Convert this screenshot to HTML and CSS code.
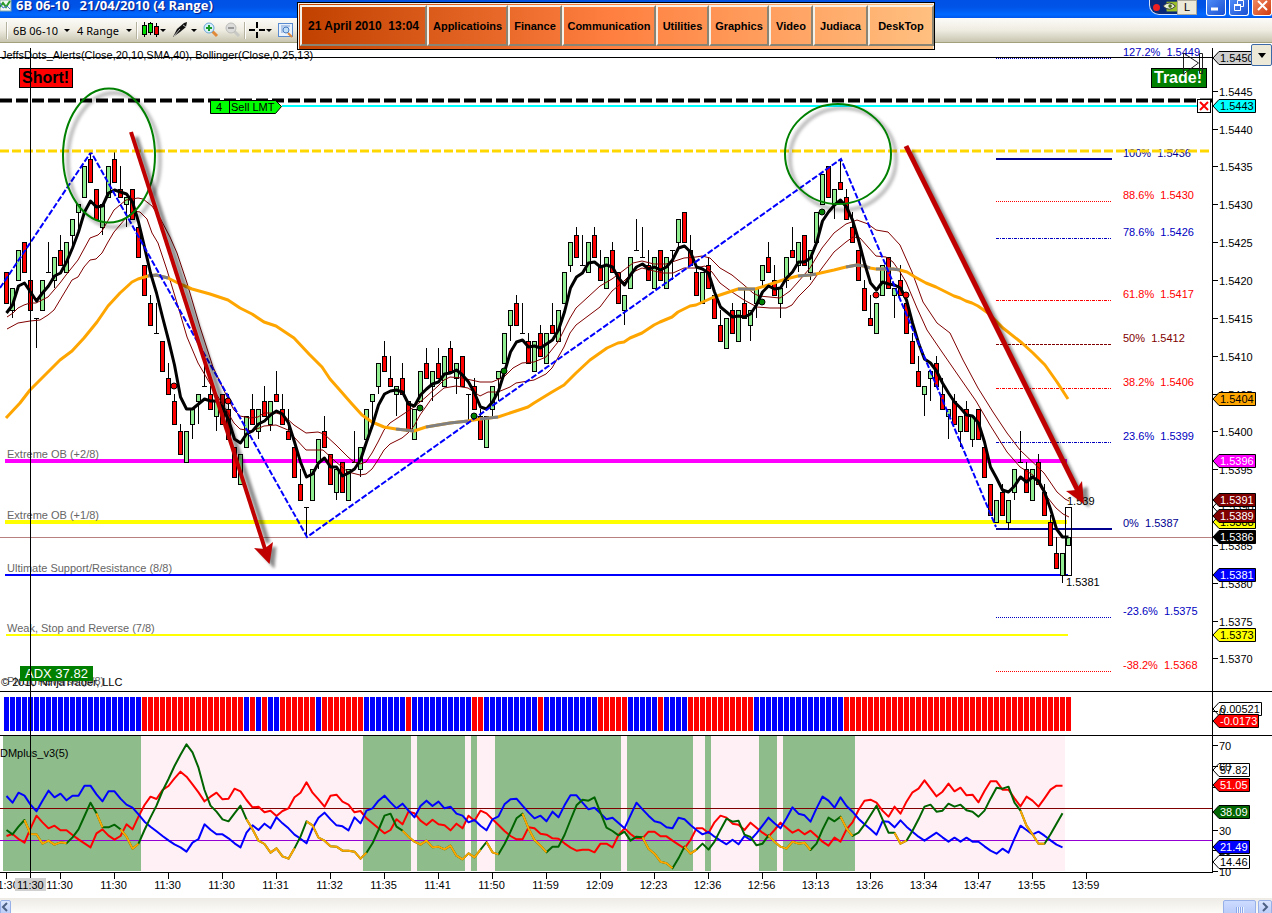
FILE: index.html
```
<!DOCTYPE html>
<html lang="en">
  <head>
    <meta charset="UTF-8" />
    <meta name="viewport" content="width=device-width, initial-scale=1.0" />
    <title>6B 06-10 21/04/2010 (4 Range)</title>
    <link rel="stylesheet" href="styles.css" />
  </head>
  <body>
    <header class="titlebar">
      <svg class="app-icon" width="12" height="13" viewBox="0 0 12 13">
        <rect x="0" y="0" width="11" height="11" fill="#f4f8f4" stroke="#8aa" />
        <path d="M0 7l3-4 3 4 4-6" fill="none" stroke="#2a9a2a" stroke-width="2" />
        <path d="M0 3l3 5 4-2 3 3" fill="none" stroke="#4477cc" />
      </svg>
      <h1>6B 06-10 &nbsp; 21/04/2010 (4 Range)</h1>
      <div class="tray">
        <i class="rec"></i>
        <svg width="18" height="12" viewBox="0 0 18 12">
          <rect x="4" y="0" width="14" height="11" fill="#9bbf2a" />
          <path d="M0 5q7-7 14 0q-7 7-14 0z" fill="#e8efd0" stroke="#334" />
          <circle cx="8" cy="5" r="2" fill="#456a10" />
        </svg>
        <span class="lang">L</span>
      </div>
      <div class="win-buttons">
        <button class="win" aria-label="Minimize"><svg width="18" height="14"><path d="M4 9h7" stroke="#fff" stroke-width="3" /></svg></button>
        <button class="win" aria-label="Restore"><svg width="18" height="14"><path d="M7.500 4V.5h6v6H11M4.500 4.500h6v6h-6z" fill="none" stroke="#fff" /><path d="M4 5h7" stroke="#fff" stroke-width="2" /></svg></button>
        <button class="win close" aria-label="Close"><svg width="18" height="14"><path d="M5 1l9 9M14 1l-9 9" stroke="#fff" stroke-width="2" /></svg></button>
      </div>
    </header>

    <nav class="toolbar">
      <span class="sep"></span>
      <label class="pick instrument"><select aria-label="Instrument"><option>6B 06-10</option></select></label>
      <label class="pick period"><select aria-label="Period"><option>4 Range</option></select></label>
      <span class="sep"></span>
      <button class="tool menu" aria-label="Chart style">
        <svg width="18" height="16" viewBox="0 0 18 16">
          <path d="M3.500 0v15M9.500 0v13M15.500 1v14" stroke="#000" />
          <rect x="1.500" y="3.500" width="4" height="9" fill="#0d0" stroke="#000" />
          <rect x="7.500" y="1.500" width="4" height="9" fill="#0d0" stroke="#000" />
          <rect x="13.500" y="4.500" width="4" height="8" fill="#e00" stroke="#000" />
        </svg>
      </button>
      <button class="tool menu" aria-label="Drawing tools">
        <svg width="18" height="16" viewBox="0 0 18 16">
          <path d="M1 15l4-8 7-6 3-1-1 5-6 5z" fill="#111" />
          <path d="M2 14l6-7M11 3l3 2" stroke="#bbb" />
        </svg>
      </button>
      <button class="tool" aria-label="Zoom in">
        <svg width="16" height="16" viewBox="0 0 16 16">
          <path d="M9 9l5 5" stroke="#e0893a" stroke-width="3" />
          <circle cx="6" cy="6" r="5" fill="#d8f0fa" stroke="#6aa5d8" />
          <path d="M3 6h6M6 3v6" stroke="#1a9a2a" stroke-width="2" />
        </svg>
      </button>
      <button class="tool" aria-label="Zoom out" disabled>
        <svg width="16" height="16" viewBox="0 0 16 16">
          <path d="M9 9l5 5" stroke="#c8c8c4" stroke-width="3" />
          <circle cx="6" cy="6" r="5" fill="#dcdcda" stroke="#bcbcba" />
          <path d="M3 6h6" stroke="#999" stroke-width="2" />
        </svg>
      </button>
      <span class="sep"></span>
      <button class="tool menu" aria-label="Cursor">
        <svg width="16" height="16" viewBox="0 0 16 16">
          <path d="M0 8h6M10 8h6M8 0v6M8 10v6" stroke="#000" stroke-width="2" />
        </svg>
      </button>
      <button class="tool" aria-label="Data box">
        <svg width="15" height="15" viewBox="0 0 15 15">
          <rect x=".5" y=".5" width="14" height="13" fill="#eaf2fc" stroke="#5a8ad0" />
          <path d="M3 3h9M3 5h2M3 7h2M3 9h2" stroke="#7aa0d8" />
          <path d="M10 10l4 4" stroke="#e0893a" stroke-width="2" />
          <circle cx="8" cy="7" r="3" fill="#bfe0f8" stroke="#4a7ac0" />
        </svg>
      </button>
    </nav>

    <div class="launcher">
      <button>21 April 2010 &nbsp;13:04</button>
      <button>Applicatioins</button>
      <button>Finance</button>
      <button>Communication</button>
      <button>Utilities</button>
      <button>Graphics</button>
      <button>Video</button>
      <button>Judiaca</button>
      <button>DeskTop</button>
    </div>

    <main class="chart">
      <svg id="chart" viewBox="0 43 1272 855" role="img" aria-label="6B 06-10 price chart">
        <defs>
          <filter id="soft" x="-20%" y="-20%" width="140%" height="140%"><feGaussianBlur stdDeviation="1.500" /></filter>
        </defs>

        <!-- DM panel background, reference levels -->
        <g id="dmBack" class="crisp"></g>
        <path class="crisp" d="M0 808.500H1212" stroke="#800000" />
        <path class="crisp" d="M0 840.500H1212" stroke="#9400d3" />
        <g id="dmLines"></g>
        <g id="bars" class="crisp"></g>

        <!-- Murrey levels -->
        <g fill="none">
          <path d="M5 461H1067" stroke="#f0f" stroke-width="4" />
          <path d="M5 522H1067" stroke="#ff0" stroke-width="4" />
          <path d="M5 575H1068" stroke="#00f" stroke-width="2" />
          <path d="M6 635H1068" stroke="#ff0" stroke-width="2" />
          <path d="M0 537.500H1212" stroke="#b98080" />
        </g>
        <g class="level">
          <text x="7" y="458">Extreme OB (+2/8)</text>
          <text x="7" y="519">Extreme OB (+1/8)</text>
          <text x="7" y="572">Ultimate Support/Resistance (8/8)</text>
          <text x="7" y="632">Weak, Stop and Reverse (7/8)</text>
          <text x="7" y="685">Pivot, Reverse (6/8)</text>
        </g>

        <g id="fibs"></g>
        <g id="candles" class="crisp"></g>
        <rect class="crisp" x="1065.500" y="507.500" width="6" height="68" fill="none" stroke="#000" />
        <g id="averages"></g>
        <polyline points="0,288 91,152 307,537 841,159 996,527" fill="none" stroke="#00f" stroke-width="2" stroke-dasharray="6 2" />
        <g id="dots"></g>
        <text x="1067" y="505">1.539</text>
        <text x="1066" y="586">1.5381</text>

        <!-- order and alert lines -->
        <path d="M0 100.500H1212" stroke="#000" stroke-width="4" stroke-dasharray="12 4" />
        <path d="M282 106H1197" stroke="#0ff" stroke-width="2" />
        <path d="M0 151H1211" stroke="#ffd700" stroke-width="3" stroke-dasharray="9 3" />
        <path d="M210.500 100.500h65l6 6-6 7h-65z" fill="#0f0" stroke="#000" />
        <path d="M229.500 101v12" stroke="#000" />
        <text x="216" y="111">4</text>
        <text x="231" y="111">Sell LMT</text>

        <!-- hand drawn marks -->
        <g fill="none" stroke="#000" stroke-opacity=".25" stroke-width="4" filter="url(#soft)">
          <ellipse cx="114" cy="160" rx="46" ry="67" />
          <ellipse cx="843" cy="159" rx="53" ry="51" />
        </g>
        <g fill="none" stroke="green" stroke-width="2">
          <ellipse cx="109" cy="155.500" rx="46" ry="67" />
          <ellipse cx="838" cy="154" rx="53" ry="50" />
        </g>
        <g stroke="#000" fill="#000" opacity=".45" filter="url(#soft)">
          <path d="M136 137L268 543" stroke-width="5" />
          <path d="M274 568l-15-17 17-4z" />
          <path d="M911 151L1080 491" stroke-width="5" />
          <path d="M1089 507l-17-13 15-7z" />
        </g>
        <g stroke="#c00000" fill="#c00000">
          <path d="M131 132L265 549" stroke-width="4" />
          <path d="M269.500 564L254 548l10 1 9-7z" stroke="none" />
          <path d="M906 146L1078 491" stroke-width="5" />
          <path d="M1084 504l-18-13 10-1 6-9z" stroke="none" />
        </g>

        <text x="1" y="59">JeffsDots_Alerts(Close,20,10,SMA,40), Bollinger(Close,0.25,13)</text>
        <rect x="19.500" y="68.500" width="53" height="19" fill="red" stroke="#000" />
        <text class="big" x="22" y="83">Short!</text>
        <rect x="1151.500" y="68.500" width="55" height="19" fill="green" stroke="#000" />
        <text class="big white" x="1154" y="83">Trade!</text>
        <path d="M1183.500 53v21l15-11zM1199.500 53.500h3v20h-3z" fill="none" stroke="#222" />

        <text x="1" y="686">© 2010 NinjaTrader, LLC</text>
        <rect x="20" y="666" width="73" height="15" fill="green" />
        <text class="adx white" x="25" y="678">ADX 37.82</text>
        <text x="0" y="757">DMplus_v3(5)</text>

        <!-- frame and crosshair -->
        <path class="crisp" d="M0 57.500H1212M30.500 48V878M0 691.500H1272M0 735.500H1272M0 872.500H1213M1212.500 48V872" stroke="#000" fill="none" />
        <g id="timeAxis"></g>
        <rect x="15" y="878" width="31" height="13" fill="#d0d0d0" />
        <text x="17" y="889">11:30</text>
        <g id="priceAxis"></g>

        <foreignObject x="1197" y="99" width="14" height="15">
          <button class="cancel" aria-label="Cancel order"><svg width="10" height="10"><path d="M1 1l8 8M9 1l-8 8" stroke="#f00" stroke-width="2" /></svg></button>
        </foreignObject>
      </svg>
      <button class="chart-menu" aria-label="Chart menu"></button>
    </main>

    <footer class="scrollbar">
      <button class="arrow prev" aria-label="Scroll left"><svg width="8" height="10"><path d="M6 1L2 5l4 4" fill="none" stroke="#4d6185" stroke-width="2" /></svg></button>
      <div class="track"><div class="thumb"></div></div>
      <button class="arrow" aria-label="Scroll right"><svg width="8" height="10"><path d="M2 1l4 4-4 4" fill="none" stroke="#4d6185" stroke-width="2" /></svg></button>
    </footer>

    <script src="chart.js"></script>
  </body>
</html>
```

FILE: styles.css
```
* {
  box-sizing: border-box;
  margin: 0;
  padding: 0;
}

body {
  display: flex;
  flex-direction: column;
  min-height: 100vh;
  overflow: hidden;
  position: relative;
  background: #fff;
  font-family: "Liberation Sans", Arial, sans-serif;
  font-size: 11px;
}

button {
  border: 0;
  background: none;
  font: inherit;
  color: inherit;
}

/* title bar */
.titlebar {
  display: flex;
  align-items: flex-start;
  height: 18px;
  background: linear-gradient(#0050e4, #0054e8 40%, #0068ff 80%, #0058ee);
}
.titlebar h1 {
  flex: 1;
  margin-left: 4px;
  line-height: 11px;
  font-family: "Open Sans", sans-serif;
  font-size: 13px;
  font-weight: bold;
  color: #fff;
  text-shadow: 1px 1px 1px #0a1883;
  white-space: nowrap;
}
.tray {
  display: flex;
  align-items: center;
  height: 15px;
  width: 48px;
  margin-right: 9px;
  padding-left: 3px;
  background: #0a2a78;
  border: 1px solid #cfe0f8;
  border-top: 0;
  border-radius: 0 0 10px 10px;
}
.tray .rec {
  flex: none;
  width: 7px;
  height: 7px;
  margin-right: 3px;
  border-radius: 50%;
  background: #f02020;
}
.tray svg {
  flex: none;
  width: 16px;
}
.tray .lang {
  flex: none;
  width: 20px;
  line-height: 13px;
  margin-left: -2px;
  text-align: center;
  background: #ece9d8;
  border: 1px solid #aca899;
}
.win-buttons {
  display: flex;
  gap: 3px;
}
.win {
  width: 20px;
  height: 16px;
  border: 1px solid #fff;
  border-top: 0;
  border-radius: 0 0 3px 3px;
  background: linear-gradient(135deg, #4f8cf8, #1a4fd0);
}
.win.close {
  background: linear-gradient(135deg, #f08860, #d03c10);
}

/* toolbar */
.toolbar {
  display: flex;
  align-items: center;
  height: 25px;
  padding: 0 6px;
  background: linear-gradient(#fcfbf7, #efede2 50%, #c8c5b0);
  border-bottom: 1px solid #a3a17c;
}
.sep {
  width: 2px;
  height: 17px;
  border-left: 1px solid #b5b2a0;
  border-right: 1px solid #fff;
}
.pick {
  position: relative;
  display: flex;
}
.pick select {
  width: 100%;
  appearance: none;
  border: 0;
  background: none;
  font-family: "Noto Sans", sans-serif;
  font-size: 11px;
}
.instrument {
  width: 57px;
  margin-left: 5px;
}
.period {
  width: 55px;
  margin: 0 4px 0 7px;
}
.pick::after,
.menu::after {
  content: "";
  flex: none;
  align-self: center;
  border: 3px solid transparent;
  border-top-color: #000;
  border-bottom: 0;
}
.tool {
  display: flex;
  align-items: center;
  gap: 1px;
  margin: 0 3px;
}

/* floating launcher bar */
.launcher {
  position: absolute;
  z-index: 2;
  top: 2px;
  left: 297px;
  display: grid;
  grid-template-columns: 127px 81px 54px 94px 53px 60px 44px 55px 66px;
  height: 48px;
  padding: 2px 0 3px 2px;
  border: 1px solid #000;
  background: linear-gradient(90deg, #c04000, #ff8040 50%, #ffc080);
  box-shadow: inset 1px 1px #f4f0e8, inset -1px 0 #f4f0e8;
}
.launcher button {
  border: 2px solid;
  border-color: #f4f0e8 #8a8474 #8a8474 #f4f0e8;
  font-size: 11px;
  font-weight: bold;
  white-space: nowrap;
}
.launcher button:first-child {
  font-size: 12px;
}

/* chart */
.chart {
  position: relative;
}
#chart {
  display: block;
  width: 100%;
  height: auto;
}
#chart .crisp {
  shape-rendering: crispEdges;
}
#chart .level {
  fill: #666;
}
#chart .big {
  font-size: 16px;
  font-weight: bold;
}
#chart .adx {
  font-size: 13px;
}
#chart .white {
  fill: #fff;
}
.cancel {
  display: flex;
  align-items: center;
  justify-content: center;
  width: 14px;
  height: 14px;
  border: 1px solid #000;
  background: #fff;
}
.chart-menu {
  position: absolute;
  top: 1px;
  right: 0;
  display: flex;
  align-items: center;
  justify-content: center;
  width: 21px;
  height: 22px;
  background: #ece9d8;
  border: 1px solid #3c6aa8;
  border-radius: 2px;
}
.chart-menu::after {
  content: "";
  border: 4px solid transparent;
  border-top: 5px solid #000;
  border-bottom: 0;
}

/* scrollbar */
.scrollbar {
  display: flex;
  height: 17px;
  padding-top: 2px;
  background: linear-gradient(#eeebe5, #fefefb);
}
.scrollbar .arrow {
  width: 14px;
  overflow: hidden;
  background: linear-gradient(#dce6fe, #b8cbf8);
  border: 1px solid #98b0e8;
  border-radius: 2px;
}
.scrollbar .prev {
  width: 11px;
  padding-right: 3px;
}
.track {
  flex: 1;
  display: flex;
  justify-content: flex-end;
  padding-right: 2px;
}
.thumb {
  display: flex;
  justify-content: center;
  width: 33px;
  background: linear-gradient(#cddbff, #b8cbf8);
  border: 1px solid #98b0e8;
  border-radius: 2px;
}
.thumb::after {
  content: "";
  width: 8px;
  margin-top: 6px;
  background: repeating-linear-gradient(90deg, #8ca8ea 0 1px, #eef4fe 1px 2px);
}
```

FILE: chart.js
```
const NS = "http://www.w3.org/2000/svg";

function add(parent, tag, attrs, text) {
  const el = document.createElementNS(NS, tag);
  for (const key in attrs) el.setAttribute(key, attrs[key]);
  if (text !== undefined) el.textContent = text;
  (typeof parent === "string" ? document.getElementById(parent) : parent).appendChild(el);
  return el;
}

// one bar every 6px, one price tick (0.0001) every 7.569px
const barX = (i) => 6 + 6 * i;
const tickY = (t) => Math.round(431.4 - t * 7.569);

// candles: colour, high, body top, body bottom, low in ticks from 1.5400
// r = down, g = up, k = unchanged
const candles = `r21,21,17,17 g19,19,16,15 g24,24,20,20 r25,25,21,21 r20,20,16,16 k15,15,15,11 g20,20,16,16
k25,21,21,21 g23,23,20,19 r26,24,22,22 g25,25,21,21 g28,28,26,24 g30,30,29,26 g35,35,31,31 r37,36,33,33
r32,32,28,28 g30,30,27,26 g35,35,31,31 r37,36,33,33 r35,32,31,31 g31,31,30,27 r32,32,28,28 r27,27,23,23
r22,22,18,18 r18,17,14,14 k17,13,13,13 r12,12,8,8 r9,7,5,5 r5,4,1,1 r1,0,-3,-3 g0,0,-4,-4 g3,3,1,-1
g5,5,4,1 k9,6,6,6 r6,5,3,3 g4,4,2,0 r5,5,1,1 r5,3,-1,-1 r-2,-2,-6,-6 g-3,-3,-7,-7 g2,2,-2,-2 r5,3,1,1
g3,3,0,-1 r6,4,2,2 g4,4,1,0 r8,5,4,4 r5,3,1,1 r3,0,-1,-1 r-2,-2,-6,-6 r-5,-7,-9,-9 k-10,-10,-10,-14
g-5,-5,-9,-9 g-1,-1,-4,-5 r2,0,-2,-2 r-3,-3,-7,-7 g-5,-5,-8,-9 r-4,-4,-8,-8 g-5,-5,-9,-9 k0,-4,-4,-4
g-2,-2,-5,-6 g3,3,-1,-1 g5,5,4,1 g9,9,6,5 r12,10,8,8 r10,7,6,6 g6,6,5,2 r9,7,5,5 r4,4,0,0 g3,3,-1,-1
g8,8,4,4 r11,9,7,7 g8,8,6,4 r11,9,7,7 g10,10,6,6 r12,11,8,8 g9,9,7,5 r10,10,6,6 k5,5,5,1 r7,6,3,3
r3,2,-1,-1 g2,2,-2,-2 g6,6,3,2 g8,8,7,4 g13,13,9,9 g16,16,14,12 r18,17,14,14 k17,13,13,13 r13,12,9,9
g12,12,8,8 r14,13,10,10 g13,13,9,9 r17,14,13,13 g16,16,12,12 g21,21,17,17 g25,25,22,21 r27,26,23,23
k26,22,22,22 g25,25,21,21 r27,26,23,23 r24,22,20,20 g23,23,19,19 r25,24,21,21 r21,21,17,17 g18,18,16,14
g23,23,19,19 k28,24,24,24 k27,23,23,23 r24,22,20,20 g23,23,19,19 r24,24,20,20 g23,23,19,19 k24,24,24,20
g28,28,25,24 r29,29,25,25 r26,24,22,22 r22,21,18,18 g21,21,17,17 r23,22,19,19 r18,18,15,15 r16,14,12,12
g15,15,11,11 r17,16,13,13 g16,16,12,12 r19,17,15,15 g16,16,14,12 g19,19,17,15 g22,22,20,19 r25,23,21,21
r22,20,18,18 g19,19,17,15 g23,23,20,19 r27,24,23,23 g25,25,22,21 r26,26,22,22 g24,24,21,20 g29,29,25,25
g34,34,30,30 r35,35,31,31 g32,32,30,28 r36,33,32,32 r32,31,28,28 r29,27,25,25 r24,24,20,20 r20,19,16,16
r18,15,14,14 g17,17,13,13 g22,22,18,18 r23,23,19,19 g19,19,18,15 r22,20,18,18 r17,17,13,13 r13,12,9,9
r10,8,6,6 g6,6,5,2 g8,8,7,4 r10,9,6,6 r7,5,3,3 g3,3,2,-1 r5,4,1,1 g2,2,0,-2 r4,3,0,0 g2,2,-1,-2 r3,3,-1,-1
r-2,-2,-6,-6 r-7,-7,-11,-11 g-9,-9,-12,-12 r-7,-8,-11,-11 g-9,-9,-12,-13 g-5,-5,-8,-9 k0,-4,-4,-4
r-4,-5,-8,-8 g-5,-5,-9,-9 r-3,-4,-7,-7 r-7,-8,-11,-11 r-11,-12,-15,-15 r-14,-16,-18,-18 g-16,-16,-19,-20
g-14,-14,-15,-15`.split(/\s+/);

candles.forEach(function (item, i) {
  const [high, top, bottom, low] = item.slice(1).split(",").map((t) => tickY(Number(t)));
  const x = barX(i);
  add("candles", "path", { d: `M${x + 0.5} ${high}V${low}`, stroke: "#000" });
  if (item[0] === "k") {
    add("candles", "path", { d: `M${x - 2} ${top + 0.5}h5`, stroke: "#000" });
  } else {
    add("candles", "rect", {
      x: x - 1.5, y: top + 0.5, width: 4, height: bottom - top,
      fill: item[0] === "r" ? "#f00" : "#90ee90", stroke: "#000",
    });
  }
});

function line(parent, points, colour, width) {
  add(parent, "polyline", {
    points: points, fill: "none", stroke: colour, "stroke-width": width, "stroke-linejoin": "round",
  });
}

// Bollinger pair
const upper = `7,317 13,313 18,308 24,305 30,303 36,303 48,297 60,283 66,275 78,260 90,238 98,235 102,231 114,210
126,200 138,198 143,199 152,206 160,218 170,237 177,253 187,283 200,327 213,367 228,399 234,410 240,416 250,418
258,417 264,413 276,413 283,415 294,425 306,433 318,432 324,434 336,445 348,457 354,462 360,464 366,462 372,453
378,442 384,430 390,423 402,415 414,407 426,397 438,386 444,380 450,377 462,378 480,382 492,382 504,377 513,368
522,363 534,362 546,357 558,342 570,318 576,308 588,297 600,286 612,279 624,270 633,263 642,261 654,264 666,264
672,262 684,258 696,257 702,256 710,258 720,268 732,275 744,285 753,293 759,296 780,298 790,291 798,282 810,268
822,248 834,233 846,224 857,220 868,224 876,230 888,232 900,245 912,272 923,302 937,323 950,333 963,360 978,388
993,412 1007,433 1020,450 1044,473 1057,492 1065,499 1069,501`;
const lower = `7,329 18,323 30,321 40,320 48,315 54,310 66,290 72,280 78,277 84,267 90,260 96,259 102,253 108,242
114,232 126,218 133,211 140,212 147,219 152,233 158,243 167,270 177,303 187,337 198,363 212,387 228,413 234,423
240,429 252,431 264,426 276,425 288,430 294,437 306,450 323,450 336,462 348,472 360,475 366,474 372,469 378,460
384,450 390,444 402,438 408,433 414,426 420,415 432,398 444,388 456,386 468,388 480,396 488,392 498,392 510,387
516,383 534,380 546,374 552,368 564,347 570,333 576,325 588,316 600,307 612,291 624,281 633,272 642,268 654,271
663,273 673,273 684,268 696,268 705,266 712,272 720,283 732,292 744,300 757,307 770,308 786,308 792,305 798,297
810,285 822,268 834,252 846,242 853,237 860,238 868,247 876,256 886,257 893,262 900,272 906,282 917,308 927,330
942,352 960,378 976,401 990,425 1007,452 1020,467 1033,475 1044,493 1056,508 1063,514 1069,517`;
line("averages", upper, "#800000", 1);
line("averages", lower, "#800000", 1);

// slow average, grey where it is flat
const slow = `6,418 20,403 30,390 45,375 60,360 72,351 84,338 97,322 108,306 120,293 132,282 138,279 148,276 156,275
168,278 180,284 192,289 210,294 216,296 228,300 240,308 252,314 264,322 276,326 294,338 309,354 322,367 330,379
338,388 352,404 362,415 372,422 384,427 396,429 414,431 426,427 450,423 468,421 480,419 498,417 516,411 528,407
534,403 552,392 564,385 576,373 590,360 607,348 618,343 624,342 630,338 642,333 654,325 660,322 672,317 678,312
690,306 696,305 714,297 726,293 738,289 755,289 768,285 786,279 798,276 810,275 816,274 834,270 846,267 857,265
864,266 870,268 876,269 893,269 900,270 907,272 915,277 926,283 936,287 954,296 960,298 966,301 972,303 978,306
988,313 1003,328 1022,343 1033,353 1045,365 1057,382 1068,399`;
line("averages", slow, "orange", 3);
[
  "148,276 156,275 168,278", "396,429 414,431", "426,427 450,423 468,421", "480,419 498,417", "738,289 755,289",
  "798,276 810,275 816,274", "846,267 857,265 864,266 870,268", "876,269 893,269 900,270",
].forEach((points) => line("averages", points, "gray", 3));

// fast average, one value per bar
const fast = [
  313, 305, 286, 283, 292, 301, 293, 286, 276, 273, 262, 248, 232, 212, 201, 207, 206, 193, 190, 192, 194, 202, 222,
  247, 273, 293, 317, 340, 365, 397, 409, 409, 404, 399, 401, 401, 407, 420, 439, 443, 434, 431, 424, 421, 415, 411,
  414, 423, 442, 462, 477, 474, 463, 458, 467, 467, 476, 473, 469, 460, 442, 425, 405, 394, 391, 390, 392, 404, 406,
  395, 389, 384, 382, 374, 373, 370, 375, 382, 393, 407, 409, 402, 391, 372, 352, 342, 340, 347, 346, 348, 344, 340,
  330, 312, 288, 277, 273, 263, 262, 267, 265, 267, 278, 285, 275, 267, 264, 269, 267, 270, 267, 260, 248, 246, 252,
  267, 269, 273, 292, 307, 312, 317, 316, 317, 314, 305, 292, 286, 289, 288, 278, 272, 262, 262, 258, 243, 221, 212,
  205, 200, 207, 220, 240, 263, 283, 290, 282, 284, 285, 288, 300, 323, 343, 359, 363, 371, 383, 393, 402, 408, 415,
  416, 423, 442, 467, 478, 490, 492, 486, 477, 482, 477, 481, 492, 509, 529, 537, 537,
];
line("averages", fast.map((y, i) => `${barX(i) + 0.5},${y}`).join(" "), "#000", 3);

[
  [174, 386, "red"], [228, 401, "red"], [420, 408, "green"], [474, 416, "green"], [504, 371, "green"],
  [762, 302, "green"], [822, 212, "green"], [876, 295, "red"], [906, 295, "red"],
].forEach(([cx, cy, fill]) => add("dots", "circle", { cx: cx, cy: cy, r: 3, fill: fill, stroke: "#000", "stroke-width": 1 }));

// fibonacci levels: label, line y, colour, dash
[
  ["127.2%  1.5449", 58, "#0000c0", "1 1"],
  ["100%  1.5436", 159, "#000090", ""],
  ["88.6%  1.5430", 201, "#f00", "1 1"],
  ["78.6%  1.5426", 238, "#0000c0", "3 1 1 1"],
  ["61.8%  1.5417", 300, "#f00", "3 1 1 1"],
  ["50%  1.5412", 344, "#800000", "3 1"],
  ["38.2%  1.5406", 388, "#f00", "3 1 1 1"],
  ["23.6%  1.5399", 442, "#0000c0", "3 1 1 1"],
  ["0%  1.5387", 529, "#000090", ""],
  ["-23.6%  1.5375", 617, "#0000c0", "1 1"],
  ["-38.2%  1.5368", 671, "#f00", "1 1"],
].forEach(function ([label, y, colour, dash]) {
  add("fibs", "path", dash
    ? { d: `M996 ${y + 0.5}H1111`, stroke: colour, "stroke-dasharray": dash }
    : { d: `M996 ${y}H1112`, stroke: colour, "stroke-width": 2 });
  add("fibs", "text", { x: 1123, y: y - 2, fill: colour }, label.replace("  ", "\u00a0 "));
});

// trend strip, run lengths
let n = 0;
"b23 r17 b1 r1 b1 r1 b2 r6 b1 r7 b7 r1 b10 r2 b9 r1 b9 r5 b5 r1 b4 r11 b15 r38".split(" ").forEach(function (run) {
  for (let k = Number(run.slice(1)); k > 0; k--, n++) {
    add("bars", "rect", { x: 4 + 6 * n, y: 697, width: 5, height: 34, fill: run[0] === "b" ? "#00f" : "#f00" });
  }
});

// DM panel background
let left = 3;
[23, 37, 8, 1, 8, 1, 1, 3, 21, 1, 11, 2, 1, 8, 3, 1, 12, 35].forEach(function (count, k) {
  add("dmBack", "rect", { x: left, y: 736, width: count * 6, height: 135, fill: k % 2 ? "#fff0f5" : "#8fbc8b" });
  left += count * 6;
});

// DM values are thirds of a pixel below y = 690
const minus = [
  438, 432, 447, 458, 415, 377, 397, 415, 407, 421, 421, 435, 448, 460, 472, 430, 418, 437, 449, 438, 403, 418, 380,
  345, 320, 327, 300, 288, 265, 245, 260, 283, 307, 334, 320, 308, 328, 326, 296, 304, 330, 352, 350, 367, 362, 378,
  363, 355, 322, 308, 277, 308, 328, 350, 317, 314, 335, 344, 367, 363, 385, 400, 415, 430, 420, 388, 403, 365, 370,
  392, 405, 389, 403, 406, 421, 401, 415, 377, 392, 362, 370, 388, 405, 423, 438, 448, 448, 412, 415, 431, 434, 445,
  446, 460, 473, 482, 479, 479, 487, 461, 461, 472, 435, 415, 432, 445, 445, 425, 425, 439, 439, 452, 464, 475, 450,
  415, 415, 429, 397, 377, 383, 401, 404, 420, 398, 413, 428, 440, 420, 398, 413, 428, 419, 433, 422, 438, 455, 467,
  443, 455, 418, 397, 360, 332, 329, 338, 362, 380, 350, 371, 335, 307, 296, 271, 295, 319, 305, 281, 304, 293, 316,
  314, 337, 303, 274, 274, 299, 299, 325, 349, 320, 332, 350, 325, 299, 287, 287,
];
const plus = [
  318, 338, 308, 317, 344, 364, 332, 302, 322, 311, 331, 317, 317, 287, 287, 313, 334, 304, 304, 326, 344, 353, 373,
  395, 410, 424, 438, 451, 463, 472, 485, 458, 447, 403, 419, 433, 433, 445, 460, 472, 428, 406, 420, 401, 415, 382,
  400, 415, 434, 446, 460, 415, 383, 368, 388, 406, 409, 421, 382, 400, 362, 355, 332, 317, 337, 355, 341, 362, 382,
  348, 332, 348, 335, 355, 350, 371, 377, 397, 390, 407, 421, 388, 379, 343, 328, 326, 347, 367, 385, 377, 394, 365,
  382, 346, 316, 316, 338, 358, 353, 370, 388, 383, 399, 415, 376, 338, 358, 377, 394, 398, 412, 415, 383, 388, 405,
  420, 433, 426, 440, 452, 463, 449, 463, 438, 450, 430, 407, 383, 400, 415, 385, 352, 371, 376, 395, 355, 320, 332,
  353, 322, 348, 365, 386, 403, 418, 434, 394, 395, 412, 391, 410, 425, 440, 452, 440, 428, 442, 455, 443, 455, 443,
  455, 455, 469, 482, 491, 476, 488, 446, 407, 420, 433, 425, 437, 451, 464, 472,
];
const adx = [
  420, 433, 410, 390, 432, 433, 461, 452, 464, 457, 460, 442, 418, 378, 338, 370, 412, 412, 404, 418, 440, 476, 461,
  420, 382, 347, 303, 267, 228, 194, 163, 187, 233, 300, 347, 365, 388, 394, 370, 347, 388, 418, 452, 462, 488, 475,
  499, 506, 475, 440, 394, 406, 443, 452, 469, 470, 482, 482, 485, 506, 488, 460, 420, 377, 371, 410, 422, 440, 455,
  464, 452, 472, 470, 478, 467, 497, 508, 490, 502, 479, 456, 487, 493, 462, 425, 385, 371, 415, 450, 467, 487, 470,
  470, 435, 390, 346, 329, 332, 322, 368, 413, 423, 436, 425, 452, 440, 442, 476, 491, 515, 520, 535, 505, 470, 491,
  479, 461, 479, 455, 419, 386, 395, 392, 434, 441, 466, 461, 436, 455, 470, 476, 455, 461, 458, 480, 461, 419, 383,
  394, 380, 415, 438, 428, 404, 376, 347, 388, 428, 428, 461, 452, 422, 388, 350, 344, 365, 362, 341, 350, 344, 361,
  365, 380, 362, 326, 293, 296, 290, 338, 362, 407, 433, 461, 461, 433, 401, 370,
];
const dmPoints = (values, from) => values.map((v, i) => `${barX(from + i) + 0.5},${690 + v / 3}`).join(" ");
line("dmLines", dmPoints(minus, 0), "#f00", 2);
line("dmLines", dmPoints(plus, 0), "#00f", 2);
line("dmLines", dmPoints(adx, 0), "#006400", 2);
[
  [3, 10], [15, 16], [19, 22], [40, 48], [50, 60], [66, 79], [80, 82], [86, 90], [106, 111], [113, 115], [127, 134],
  [139, 141], [148, 150], [169, 173],
].forEach(([a, b]) => line("dmLines", dmPoints(adx.slice(a, b + 1), a), "orange", 2));

// time axis
[
  "11:30", "11:30", "11:30", "11:30", "11:30", "11:31", "11:32", "11:35", "11:41", "11:50", "11:59", "12:09", "12:23",
  "12:36", "12:56", "13:13", "13:26", "13:34", "13:47", "13:55", "13:59",
].forEach(function (label, k) {
  const x = 6.5 + 54 * k;
  add("timeAxis", "path", { d: `M${x} 873v6`, stroke: "#000" });
  add("timeAxis", "text", { x: x - 1, y: 889, "text-anchor": "middle" }, label);
});

// price axis
function axisLabel(y, label) {
  add("priceAxis", "path", { d: `M1212 ${y - 0.5}h6`, stroke: "#000" });
  add("priceAxis", "text", { x: 1219, y: y + 4 }, label);
}
for (let t = 45; t >= -30; t -= 5) {
  axisLabel(tickY(t) + 1, (1.54 + t / 10000).toFixed(4));
}
[[712, "0"], [746, "70"], [767, "60"], [788, "50"], [831, "30"], [851, "20"], [872, "10"]].forEach(([y, label]) => axisLabel(y, label));

// tags: y, label, fill, text colour, right edge
[
  [58, "1.5450", "#d0d0d0", "#000", 1256],
  [106, "1.5443", "#0ff", "#000", 1256],
  [399, "1.5404", "orange", "#000", 1256],
  [461, "1.5396", "#f0f", "#fff", 1256],
  [507, "1.5390", "#fff", "#000", 1256],
  [500, "1.5391", "#800000", "#fff", 1256],
  [522, "1.5388", "#ff0", "#000", 1256],
  [516, "1.5389", "#800000", "#fff", 1256],
  [537, "1.5386", "#000", "#fff", 1256],
  [575, "1.5381", "#00f", "#fff", 1256],
  [635, "1.5373", "#ff0", "#000", 1256],
  [709, "0.00521", "none", "#000", 1262],
  [721, "-0.0173", "#f00", "#fff", 1259],
  [770, "57.82", "none", "#000", 1250],
  [785, "51.05", "#f00", "#fff", 1250],
  [812, "38.09", "#006400", "#fff", 1250],
  [847, "21.49", "#00f", "#fff", 1250],
  [862, "14.46", "#fff", "#000", 1250],
].forEach(function ([y, label, fill, colour, right]) {
  add("priceAxis", "path", { d: `M1213 ${y}l6-6.500H${right - 0.5}v13H1219z`, fill: fill, stroke: "#000" });
  add("priceAxis", "text", { x: 1220, y: y + 4, fill: colour }, label);
});
```
